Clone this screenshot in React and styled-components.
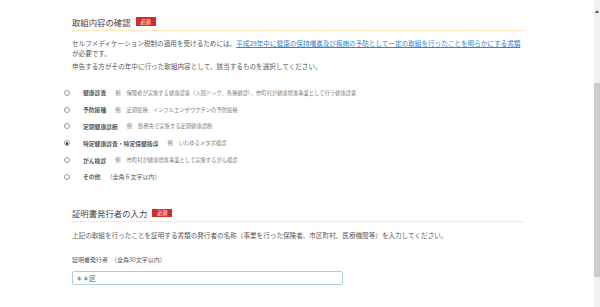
import React from "react";
import styled, { createGlobalStyle } from "styled-components";

const GlobalStyle = createGlobalStyle`
  html, body {
    margin: 0;
    padding: 0;
    background: #fff;
  }
  body {
    font-family: "Noto Sans CJK JP", "Noto Sans", sans-serif;
    color: #5a5a5a;
  }
`;

const Page = styled.div`
  display: flex;
  height: 307px;
  overflow: hidden;
`;

const Main = styled.main`
  flex: 1;
  padding: 15px 0 0 72px;
`;

const Section = styled.section`
  width: 451px;
  margin-top: ${(p) => p.$gap || 0}px;
`;

const TitleRow = styled.div`
  display: flex;
  align-items: center;
  gap: 5px;
  height: 13px;
  padding-bottom: 2px;
  border-bottom: 1px dotted #f0d3a8;
`;

const Title = styled.h2`
  margin: 0;
  font-size: 8.4px;
  font-weight: 400;
  color: #444;
  line-height: 12px;
`;

const Badge = styled.span`
  display: inline-flex;
  align-items: center;
  justify-content: center;
  width: 20px;
  height: 8.5px;
  background: #d52b2b;
  color: #fff;
  font-size: 5.2px;
  line-height: 8px;
`;

const Text = styled.p`
  margin: ${(p) => p.$top || 0}px 0 0;
  font-size: 6.6px;
  line-height: ${(p) => p.$lh || 10}px;
  white-space: nowrap;
`;

const Link = styled.a`
  color: #2f86cc;
  text-decoration: underline;
`;

const RadioList = styled.ul`
  list-style: none;
  margin: 14px 0 0 -8px;
  padding: 0;
`;

const RadioItem = styled.li`
  display: flex;
  align-items: center;
  height: 16.8px;
  white-space: nowrap;
`;

const Circle = styled.span`
  box-sizing: border-box;
  width: 6px;
  height: 6px;
  border-radius: 50%;
  border: 1px solid #9a9a9a;
  margin-right: 13px;
  display: flex;
  align-items: center;
  justify-content: center;
  &::after {
    content: "";
    width: 2.5px;
    height: 2.5px;
    border-radius: 50%;
    background: ${(p) => (p.$checked ? "#333" : "transparent")};
  }
`;

const RadioLabel = styled.span`
  font-size: 5.8px;
  font-weight: 700;
  color: #5a5a5a;
`;

const Example = styled.span`
  font-size: 5.3px;
  color: #808080;
  margin-left: 9px;
`;

const ExampleMark = styled.span`
  margin-right: 6px;
`;

const Note = styled.span`
  font-size: 6px;
  color: #5a5a5a;
  margin-left: 6px;
`;

const Field = styled.div`
  margin-top: 15px;
`;

const FieldLabel = styled.label`
  display: block;
  font-size: 6px;
  line-height: 10px;
  color: #5a5a5a;
`;

const Input = styled.input`
  box-sizing: border-box;
  display: block;
  width: 271px;
  height: 14px;
  margin-top: 6px;
  padding: 0 3px;
  border: 1px solid #a9d0dc;
  border-radius: 2px;
  font-family: inherit;
  font-size: 6.6px;
  color: #444;
  outline: none;
`;

const Scrollbar = styled.div`
  width: 6px;
  background: #f1f1f1;
  display: flex;
  flex-direction: column;
  align-items: center;
`;

const Arrow = styled.span`
  margin-top: 10px;
  width: 0;
  height: 0;
  border-left: 2px solid transparent;
  border-right: 2px solid transparent;
  border-bottom: 3px solid #505050;
`;

const Thumb = styled.div`
  width: 6px;
  height: 194px;
  margin-top: 70px;
  background: #cdcdcd;
`;

const options = [
  { label: "健康診査", ex: "保険者が実施する健康診査（人間ドック、各種健診）、市町村が健康増進事業として行う健康診査" },
  { label: "予防接種", ex: "定期接種、インフルエンザワクチンの予防接種" },
  { label: "定期健康診断", ex: "勤務先で実施する定期健康診断" },
  { label: "特定健康診査・特定保健指導", ex: "いわゆるメタボ検診", checked: true },
  { label: "がん検診", ex: "市町村が健康増進事業として実施するがん検診" },
  { label: "その他", note: "（全角６文字以内）" },
];

export default function App() {
  return (
    <Page>
      <GlobalStyle />
      <Main>
        <Section>
          <TitleRow>
            <Title>取組内容の確認</Title>
            <Badge>必須</Badge>
          </TitleRow>
          <Text $top={7}>
            セルフメディケーション税制の適用を受けるためには、
            <Link>平成29年中に健康の保持増進及び疾病の予防として一定の取組を行ったことを明らかにする書類</Link>
            <br />
            が必要です。
          </Text>
          <Text $top={2.5}>申告する方がその年中に行った取組内容として、該当するものを選択してください。</Text>
          <RadioList>
            {options.map((o) => (
              <RadioItem key={o.label}>
                <Circle $checked={o.checked} />
                <RadioLabel>{o.label}</RadioLabel>
                {o.ex && (
                  <Example>
                    <ExampleMark>例</ExampleMark>
                    {o.ex}
                  </Example>
                )}
                {o.note && <Note>{o.note}</Note>}
              </RadioItem>
            ))}
          </RadioList>
        </Section>
        <Section $gap={21}>
          <TitleRow>
            <Title>証明書発行者の入力</Title>
            <Badge>必須</Badge>
          </TitleRow>
          <Text $top={8}>
            上記の取組を行ったことを証明する書類の発行者の名称（事業を行った保険者、市区町村、医療機関等）を入力してください。
          </Text>
          <Field>
            <FieldLabel>
              証明書発行者　（全角30文字以内）
            </FieldLabel>
            <Input defaultValue="＊＊区" />
          </Field>
        </Section>
      </Main>
      <Scrollbar>
        <Arrow />
        <Thumb />
      </Scrollbar>
    </Page>
  );
}
